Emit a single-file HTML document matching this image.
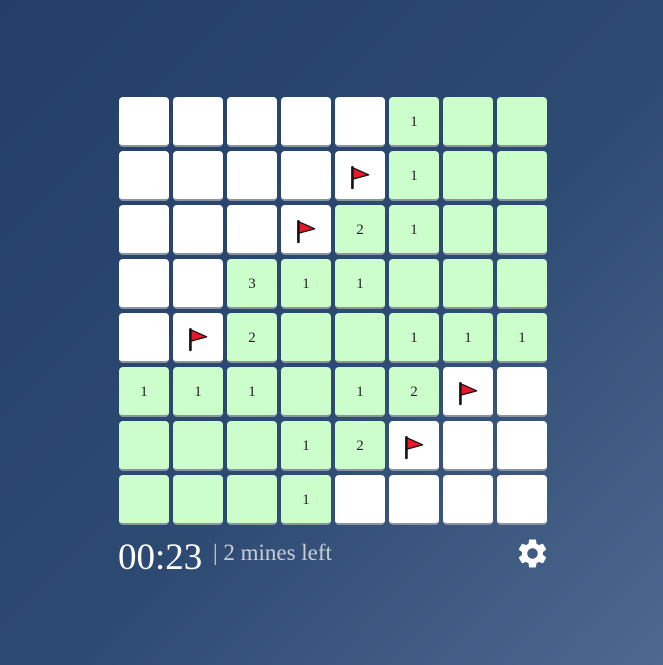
<!DOCTYPE html><html><head><style>
html,body{margin:0;padding:0}
body{width:663px;height:665px;background:linear-gradient(135deg,#233f68 0%,#2d4a72 55%,#4e6990 100%);position:relative;overflow:hidden;font-family:"Liberation Serif",serif}
.c{position:absolute;width:50px;height:50px;border-radius:4px;box-sizing:border-box;border-bottom:2px solid #8a94a0;display:flex;align-items:center;justify-content:center;font-size:15px;color:#222;padding-top:3px}
.w{background:#fff}.g{background:#ccfecb}
.f{position:absolute;left:118px;top:536px;color:#fff;font-size:37px}
.m{position:absolute;left:213px;top:540px;color:#c9ced6;font-size:23px}
</style></head><body>
<div id="grid"></div>
<div class="f">00:23</div>
<div class="m">| 2 mines left</div>
<svg style="position:absolute;left:515px;top:536px" width="35" height="35" viewBox="0 0 24 24"><path fill="#fff" d="M19.14 12.94c.04-.3.06-.61.06-.94 0-.32-.02-.64-.07-.94l2.030-1.58a.49.49 0 0 0 .12-.61l-1.92-3.32a.49.49 0 0 0-.59-.22l-2.39.96c-.5-.38-1.03-.7-1.62-.94l-.36-2.54a.48.48 0 0 0-.48-.41h-3.84c-.24 0-.43.17-.47.41l-.36 2.540c-.59.24-1.13.57-1.62.94l-2.39-.96a.49.49 0 0 0-.59.22L2.74 8.87c-.12.21-.08.47.12.61l2.03 1.58c-.05.3-.09.63-.09.94s.02.64.07.94l-2.03 1.58a.49.49 0 0 0-.12.61l1.92 3.32c.12.22.37.29.59.22l2.39-.96c.5.38 1.03.7 1.62.94l.36 2.54c.05.24.24.41.48.41h3.84c.24 0 .44-.17.47-.41l.36-2.54c.59-.24 1.13-.56 1.62-.94l2.39.96c.22.08.47 0 .59-.22l1.92-3.32c.12-.22.07-.47-.12-.61l-2.01-1.58zM12 15.6c-1.98 0-3.6-1.62-3.6-3.6s1.62-3.6 3.6-3.6 3.6 1.62 3.6 3.6-1.62 3.6-3.6 3.6z"/></svg>
<script>
var L=["WWWWWg1gg","WWWWFg1gg","WWWFg2g1gg","WWg3g1g1ggg","WFg2ggg1g1g1","g1g1g1gg1g2FW","gggg1g2FWW","gggg1WWWW"];
var h="";
L.forEach(function(r,y){var cells=r.match(/W|F|g\d?/g);cells.forEach(function(c,x){
var cls=(c[0]=="g")?"g":"w";var t=c.length>1?c[1]:"";
if(c=="F")t='<svg width="24" height="26" viewBox="0 0 22 24"><path d="M4 3v19" stroke="#111" stroke-width="2.4" stroke-linecap="round"/><path d="M4.5 3.5L19 10L4.5 14z" fill="#e8182a" stroke="#111" stroke-width="1.2" stroke-linejoin="round"/></svg>';
h+='<div class="c '+cls+'" style="left:'+(119+x*54)+'px;top:'+(97+y*54)+'px">'+t+'</div>';});});
document.getElementById("grid").innerHTML=h;
</script>
</body></html>
